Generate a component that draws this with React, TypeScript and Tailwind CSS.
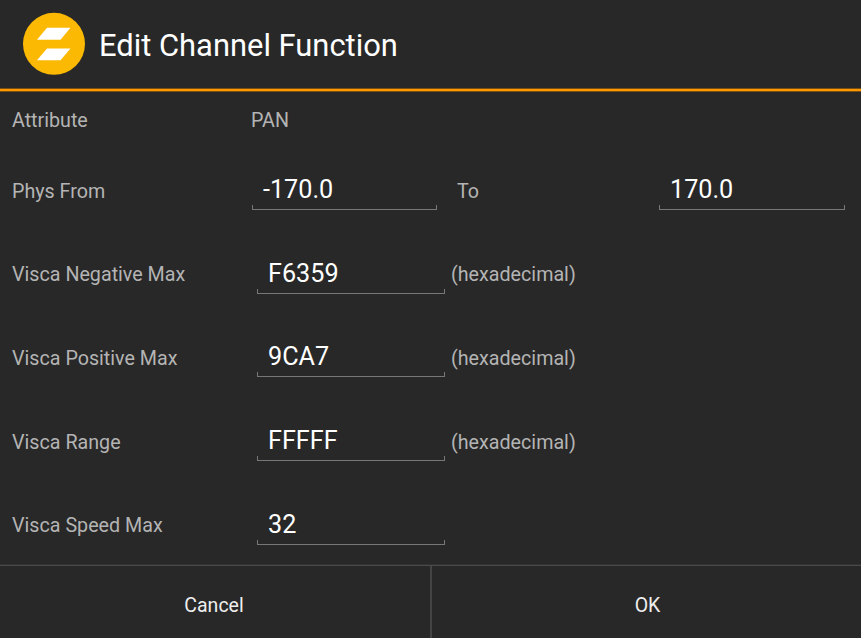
interface FieldProps {
  value: string;
  className?: string;
}

interface ViscaRow {
  label: string;
  value: string;
  unit?: string;
}

const VISCA_ROWS: ViscaRow[] = [
  { label: 'Visca Negative Max', value: 'F6359', unit: '(hexadecimal)' },
  { label: 'Visca Positive Max', value: '9CA7', unit: '(hexadecimal)' },
  { label: 'Visca Range', value: 'FFFFF', unit: '(hexadecimal)' },
  { label: 'Visca Speed Max', value: '32' },
];

function Logo() {
  return (
    <svg className="size-[62px] shrink-0 overflow-visible" viewBox="0 0 62 62" aria-hidden="true">
      <circle cx="31" cy="30.8" r="31" fill="#fbb903" />
      <path d="M24 14.7H47.5L37.5 26.7H14Z" fill="#fff" />
      <path d="M24 35.5H47.5L37.5 47.3H14Z" fill="#fff" />
    </svg>
  );
}

function Field({ value, className }: FieldProps) {
  return (
    <div className={`flex shrink-0 flex-col pt-[3px] ${className ?? ''}`}>
      <span className="pl-[11px] text-[25.2px] leading-[31px] text-white">{value}</span>
      <div className="h-[5px] border-x border-b border-[#777]" />
    </div>
  );
}

export default function App() {
  return (
    <div className="flex h-screen w-full flex-col overflow-hidden bg-[#282828] font-['Roboto',sans-serif] text-[19.7px] text-[#b4b4b4]">
      <header className="flex h-[87px] shrink-0 items-center gap-3.5 pl-[23px]">
        <Logo />
        <h1 className="pt-[5px] text-[30.9px] text-white">Edit Channel Function</h1>
      </header>
      <div className="mt-px h-1 shrink-0 border-y border-[#794f14] bg-[#fe9800]" />

      <main className="flex min-h-0 flex-1 flex-col pl-3">
        <div className="flex h-14 shrink-0 items-center pt-0.5">
          <span className="w-[239px]">Attribute</span>
          <span>PAN</span>
        </div>

        <div className="flex h-[84.3px] shrink-0 items-center">
          <span className="w-60 pt-[3px]">Phys From</span>
          <Field value="-170.0" className="w-[185px]" />
          <span className="ml-5 w-[202px] pt-[3px]">To</span>
          <Field value="170.0" className="w-[186px]" />
        </div>

        {VISCA_ROWS.map(({ label, value, unit }) => (
          <div key={label} className="flex h-[83.7px] shrink-0 items-center">
            <span className="w-[245px] pt-0.5">{label}</span>
            <Field value={value} className="w-[188px]" />
            {unit && <span className="ml-1.5 pt-0.5">{unit}</span>}
          </div>
        ))}
      </main>

      <footer className="flex h-[74px] shrink-0 flex-col border-t border-[#333] text-[19.5px] text-[#eee]">
        <div className="flex flex-1 border-t border-[#4a4a4a]">
          <button className="w-[430px] pt-2 pr-0.5">Cancel</button>
          <button className="flex-1 border-l-2 border-[#444] pt-2 pl-0.5">OK</button>
        </div>
      </footer>
    </div>
  );
}
